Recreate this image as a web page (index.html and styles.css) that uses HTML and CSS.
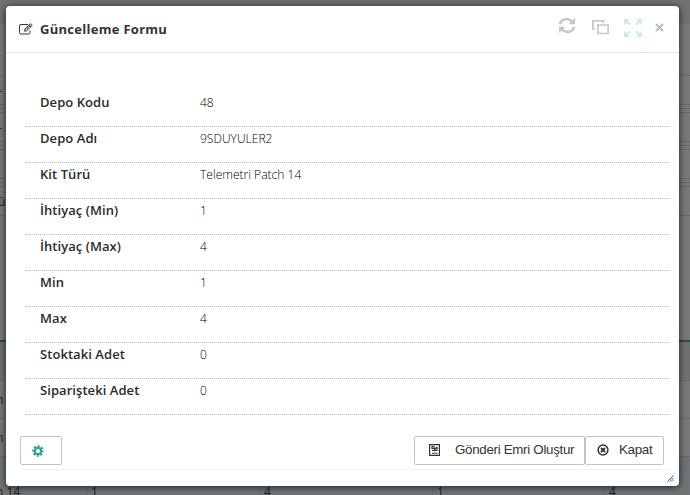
FILE: index.html
```html
<!DOCTYPE html>
<html lang="tr">
<head>
<meta charset="utf-8">
<title>Güncelleme Formu</title>
<link rel="stylesheet" href="styles.css">
</head>
<body>
<div class="page">
  <div class="bar"></div>
  <div class="panel"></div>
  <div class="field"><span>-</span></div>
  <div class="gap"></div>
  <div class="field"><span>-</span></div>
  <div class="gap"></div>
  <div class="field"></div>
  <div class="gap"></div>
  <div class="field"><span>ü</span></div>
  <div class="space"></div>
  <div class="thead"></div>
  <div class="trow"><span>n</span></div>
  <div class="trow"><span>n</span></div>
  <div class="trow last"><span>n 14</span><span>1</span><span>4</span><span>1</span><span>4</span></div>
</div>
<section class="dialog">
  <header class="head">
    <svg class="edit" viewBox="0 0 14 12" width="14" height="12" fill="none" stroke="#333"><path d="M9 1.500H2Q.5 1.500.5 3v6.500Q.5 11 2 11h7.500Q11 11 11 9.500V7.500"/><path d="M5.500 8.200l.5-2.200 5.500-5.300 1.700 1.700-5.500 5.400z" fill="#fff"/><path d="M7.200 6.500l4-4M10.200 1.900l1.700 1.700"/></svg>
    <h1>Güncelleme Formu</h1>
    <div class="tools">
      <svg class="refresh" viewBox="0 0 18 17" width="18" height="17" fill="none" stroke="#c6c6c6" stroke-width="2.500"><path d="M2 7.200C3 1.800 10 .1 13.800 4.500M16 9.800C15 15.200 8 16.900 4.200 12.500"/><path d="M17 .8v6.400h-6.400zM1 16.200V9.800h6.400z" fill="#c6c6c6" stroke="none"/></svg>
      <svg class="copy" viewBox="0 0 17 15" width="17" height="15" fill="none" stroke="#c8c8c8" stroke-width="1.700"><path d="M2.900 9H.9V.9h10.600v2"/><path d="M5.800 5h10.300v8.500H5.800z"/></svg>
      <svg class="expand" viewBox="0 0 18 18" width="18" height="18" fill="#cdebe8" stroke="#cdebe8" stroke-width="2"><path d="M0 0h6L0 6zM18 0v6l-6-6zM0 18v-6l6 6zM18 18h-6l6-6z" stroke="none"/><path d="M1 1l4.800 4.800M17 1l-4.800 4.800M1 17l4.800-4.800M17 17l-4.800-4.800"/></svg>
      <svg class="close" viewBox="0 0 9 9" width="9" height="9" stroke="#bbb" stroke-width="2"><path d="M1 1l7 7M8 1L1 8"/></svg>
    </div>
  </header>
  <dl class="rows">
    <div><dt>Depo Kodu</dt><dd>48</dd></div>
    <div><dt>Depo Adı</dt><dd>9SDUYULER2</dd></div>
    <div><dt>Kit Türü</dt><dd>Telemetri Patch 14</dd></div>
    <div><dt>İhtiyaç (Min)</dt><dd>1</dd></div>
    <div><dt>İhtiyaç (Max)</dt><dd>4</dd></div>
    <div><dt>Min</dt><dd>1</dd></div>
    <div><dt>Max</dt><dd>4</dd></div>
    <div><dt>Stoktaki Adet</dt><dd>0</dd></div>
    <div><dt>Siparişteki Adet</dt><dd>0</dd></div>
  </dl>
  <footer class="foot">
    <button class="btn gear"><svg viewBox="0 0 12 12" width="12" height="12" fill="none" stroke="#35a197"><circle cx="6" cy="6" r="3.200" stroke-width="2.300"/><circle cx="6" cy="6" r="4.900" stroke-width="1.800" stroke-dasharray="2.200 1.648" stroke-dashoffset="1.100"/></svg></button>
    <button class="btn send"><svg viewBox="0 0 11 12" width="11" height="12" fill="none" stroke="#333"><path d="M.6.6h9.800v10.800H.6z" stroke-width="1.200"/><path d="M3 2.500h2v2H3zM5 6l3-3M8 3v4M3 6.500h5M3 9.300h5.500" stroke-width="1.100"/></svg><span>Gönderi Emri Oluştur</span></button>
    <button class="btn shut"><svg viewBox="0 0 12 12" width="12" height="12" fill="none" stroke="#333"><circle cx="6" cy="6" r="4.900" stroke-width="1.500"/><path d="M4 4l4 4M8 4L4 8" stroke-width="1.900"/></svg><span>Kapat</span></button>
  </footer>
  <svg class="grip" viewBox="0 0 7 7" width="7" height="7" stroke="#555"><path d="M.5 6.500l6-6M3 6.500L6.500 3M5.300 6.500l1.200-1.200"/></svg>
</section>
</body>
</html>
```
FILE: styles.css
```css
* { box-sizing: border-box; }
body {
  margin: 0;
  width: 690px;
  height: 495px;
  overflow: hidden;
  position: relative;
  padding: 6px;
  font-family: "Open Sans", sans-serif;
  font-size: 13px;
  color: #333;
}
.page {
  position: absolute;
  inset: 0;
  overflow: hidden;
  background: #787878;
  color: #222;
  font-size: 12px;
}
.bar { height: 24px; background: #717171; }
.panel { height: 52px; border-bottom: 1px solid #696969; }
.field { height: 29px; border-bottom: 1px solid #676767; line-height: 29px; }
.field span { display: block; margin-left: -2px; }
.gap {
  height: 8px;
  border-bottom: 1px solid #676767;
  background: linear-gradient(#787878 3px, #696969 3px, #696969 4px, #787878 4px);
}
.space { height: 124px; }
.thead { height: 41px; border-top: 2px solid #1b5148; border-bottom: 1px solid #696969; background: #707070; }
.trow { height: 38px; border-bottom: 1px solid #696969; line-height: 38px; }
.trow span { display: block; margin-left: -4px; }
.trow.last {
  height: 60px;
  background: #6e7376;
  display: grid;
  grid-template-columns: 86px 173px 173px 172px 1fr;
  line-height: 70px;
}
.trow.last span { margin-left: 0; padding-left: 4px; border-left: 1px solid #666a6d; }
.trow.last span:first-child { margin-left: -8px; border: 0; }
.dialog {
  position: relative;
  width: 673px;
  height: 480px;
  background: #fff;
  border-radius: 4px;
  box-shadow: 0 1px 7px rgba(0, 0, 0, .75);
}
.head {
  height: 47px;
  border-bottom: 1px solid #e2e2e2;
  display: flex;
  align-items: center;
  padding: 0 15px 0 13px;
}
.edit { margin-top: 0; }
h1 { margin: -1px 0 0 7px; font-size: 13px; line-height: 18px; font-weight: 700; letter-spacing: .28px; }
.tools { margin-left: auto; display: flex; align-items: center; }
.refresh { margin: -7px 16px 0 0; }
.copy { margin: -4px 15px 0 0; }
.expand { margin: -3px 13px 0 0; }
.close { margin-top: -4px; }
.rows { margin: 38px 10px 0 19px; }
.rows div {
  display: flex;
  height: 36px;
  padding: 2px 0 0 15px;
  line-height: 18px;
  border-bottom: 1px dotted #bdbdbd;
}
dt { width: 160px; font-weight: 600; color: #2b2b2b; letter-spacing: .06px; }
dd { margin: 1px 0 0; font-size: 12px; font-weight: 300; color: #000; letter-spacing: .02px; }
.foot {
  margin: 21px 9px 0 14px;
  height: 34px;
  display: flex;
  border-bottom: 1px solid #f3f3f3;
}
.btn {
  height: 29px;
  padding: 0 0 2px;
  border: 1px solid #c3c3c3;
  border-radius: 2px;
  background: #fff;
  display: flex;
  align-items: center;
  font: 13.33px/20px "Liberation Sans", sans-serif;
  color: #333;
}
.gear { width: 42px; padding: 0 0 0 11px; }
.send { width: 171px; margin-left: auto; padding-left: 14px; }
.send span { margin-left: 15px; letter-spacing: -.3px; white-space: nowrap; }
.shut { width: 79px; padding-left: 11px; margin-right: 6px; }
.shut span { margin-left: 10px; letter-spacing: -.28px; }
.grip { position: absolute; right: 5px; bottom: 4px; }
```
